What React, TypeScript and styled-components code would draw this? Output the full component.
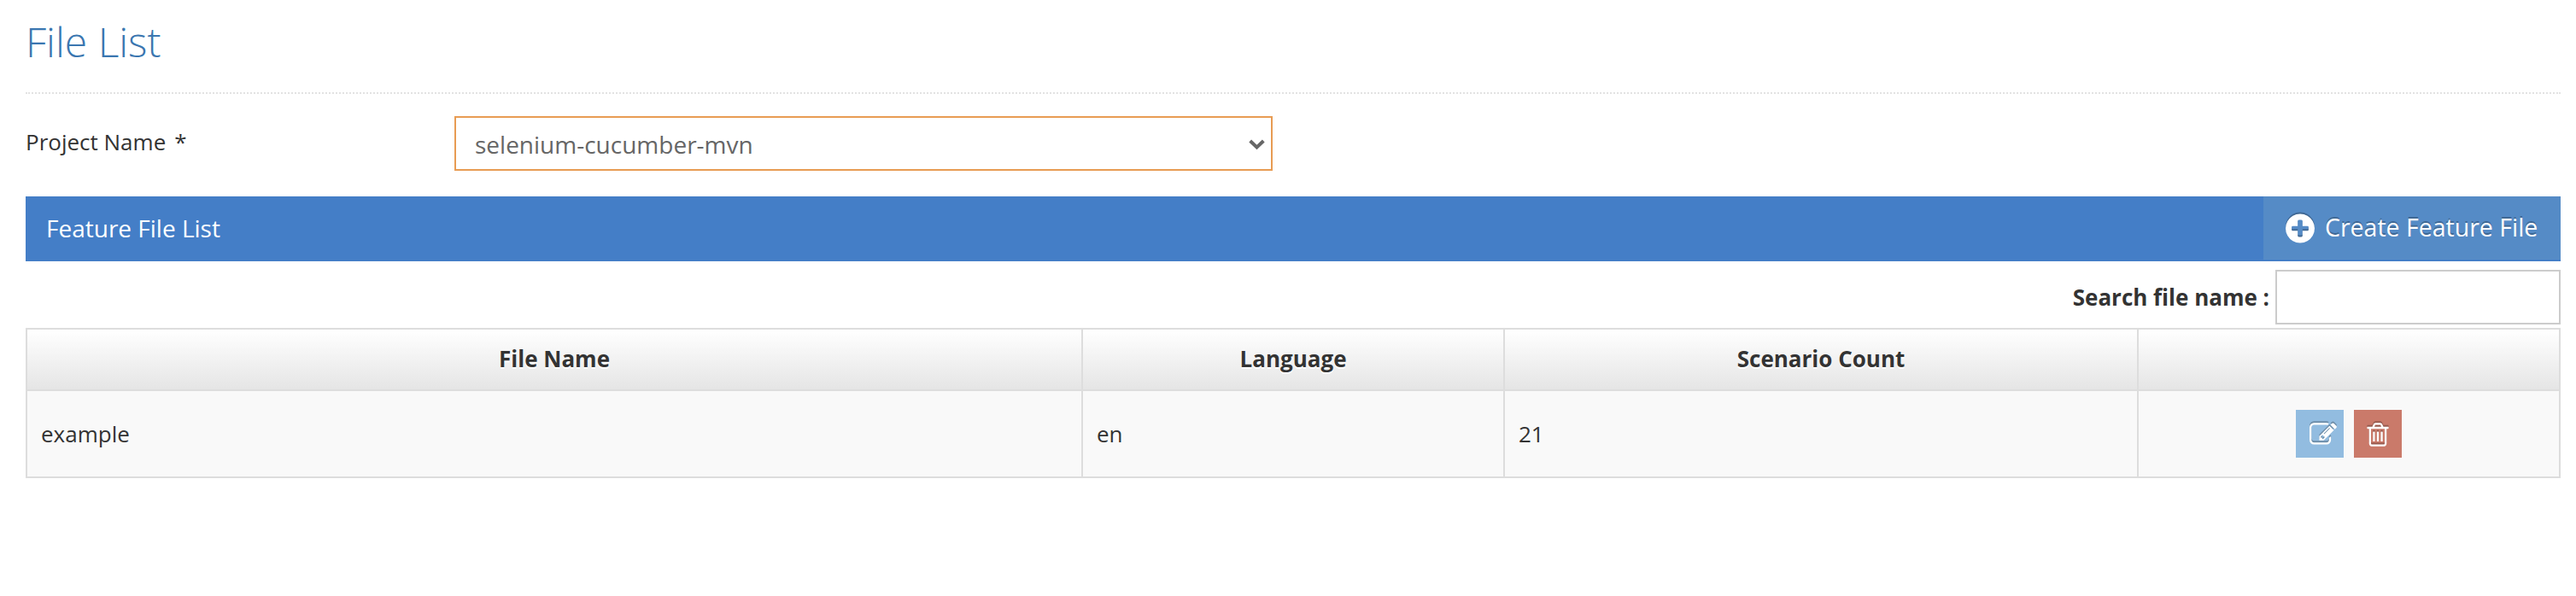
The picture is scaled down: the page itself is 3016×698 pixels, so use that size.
import React from 'react';
import styled, { createGlobalStyle } from 'styled-components';

const GlobalStyle = createGlobalStyle`
  * { box-sizing: border-box; }
  body {
    margin: 0;
    background: #fff;
    color: #333;
    font-family: 'Open Sans', sans-serif;
    font-size: 26px;
    line-height: 40px;
  }
`;

const Page = styled.main`
  width: 3016px;
  height: 698px;
  padding: 0 18px 0 30px;
`;

const PageHeader = styled.header`
  height: 110px;
  padding-top: 16px;
  border-bottom: 2px dotted #e2e2e2;
`;

const Title = styled.h1`
  margin: 0;
  font-size: 48px;
  font-weight: 300;
  line-height: 66px;
  color: #3a76b0;
`;

const FormRow = styled.div`
  display: flex;
  height: 120px;
  padding-top: 26px;
`;

const FieldLabel = styled.label`
  width: 502px;
  padding-top: 10px;
`;

const Required = styled.span`
  margin-left: 10px;
`;

const SelectBox = styled.div`
  display: flex;
  align-items: center;
  justify-content: space-between;
  width: 958px;
  height: 64px;
  padding: 2px 7px 0 22px;
  border: 2px solid #e89c53;
  font-size: 28px;
  color: #666;
`;

const TitleBar = styled.div`
  display: flex;
  justify-content: space-between;
  height: 76px;
  padding-left: 24px;
  background: #447ec7;
  color: #fff;
  font-size: 28px;
  line-height: 74px;
`;

const CreateButton = styled.button`
  display: flex;
  align-items: center;
  width: 348px;
  height: 74px;
  padding: 0 0 0 25.5px;
  border: 0;
  background: #558bc6;
  color: #fff;
  font: inherit;
  font-size: 28.5px;
  text-shadow: 0 -2px 0 rgba(0, 0, 0, 0.25);
`;

const CreateLabel = styled.span`
  margin-left: 12.5px;
  padding-bottom: 2px;
`;

const Icon = styled.svg<{ $size: number }>`
  display: block;
  flex: none;
  width: ${(p) => p.$size}px;
  height: ${(p) => p.$size}px;
  fill: currentColor;
  overflow: visible;
  filter: drop-shadow(0 -2px 0 rgba(0, 0, 0, 0.25));
`;

const SearchRow = styled.div`
  display: flex;
  justify-content: flex-end;
  align-items: center;
  gap: 7px;
  height: 64px;
  margin: 10px 0 4px;
  font-weight: 700;
`;

const SearchInput = styled.input`
  width: 334px;
  height: 64px;
  border: 2px solid #ccc;
  background: #fff;
`;

const Table = styled.table`
  width: 2968px;
  table-layout: fixed;
  border-collapse: separate;
  border-spacing: 0;
  border-top: 2px solid #ddd;
  border-left: 2px solid #ddd;
`;

const HeadCell = styled.th<{ $width: number }>`
  width: ${(p) => p.$width}px;
  height: 72px;
  padding: 0 0 2px;
  border-right: 2px solid #ddd;
  border-bottom: 2px solid #ddd;
  background: linear-gradient(#fff, #e5e5e5);
  font-weight: 700;
  text-align: center;
  text-shadow: 0 2px 0 #fff;
`;

const Cell = styled.td`
  height: 102px;
  padding: 0 16px;
  border-right: 2px solid #ddd;
  border-bottom: 2px solid #ddd;
  background: #f9f9f9;
`;

const Actions = styled.div`
  display: flex;
  justify-content: center;
  gap: 12px;
`;

const ActionButton = styled.button<{ $color: string; $indent?: number }>`
  display: flex;
  align-items: center;
  justify-content: center;
  width: 56px;
  height: 56px;
  padding: 1px 0 0 ${(p) => p.$indent ?? 0}px;
  border: 0;
  background: ${(p) => p.$color};
  color: #fff;
`;

const PLUS =
  'M1344 960v-128q0-26-19-45t-45-19h-256v-256q0-26-19-45t-45-19h-128q-26 0-45 19t-19 45v256h-256q-26 0-45 19t-19 45v128q0 26 19 45t45 19h256v256q0 26 19 45t45 19h128q26 0 45-19t19-45v-256h256q26 0 45-19t19-45zm320-64q0 209-103 385.500t-279.500 279.500-385.500 103-385.500-103-279.500-279.500-103-385.500 103-385.500 279.500-279.500 385.500-103 385.500 103 279.500 279.500 103 385.500z';
const EDIT =
  'M888 1184l116-116-152-152-116 116v56h96v96h56zm440-720q-16-16-33 1l-350 350q-17 17-1 33t33-1l350-350q17-17 1-33zm80 594v190q0 119-84.500 203.500t-203.500 84.500h-832q-119 0-203.500-84.500t-84.500-203.500v-832q0-119 84.500-203.500t203.500-84.500h832q63 0 117 25 15 7 18 23 3 17-9 29l-49 49q-14 14-32 8-23-6-45-6h-832q-66 0-113 47t-47 113v832q0 66 47 113t113 47h832q66 0 113-47t47-113v-126q0-13 9-22l64-64q15-15 35-7t20 29zm-96-738l288 288-672 672h-288v-288zm444 132l-92 92-288-288 92-92q28-28 68-28t68 28l152 152q28 28 28 68t-28 68z';
const TRASH =
  'M704 736v576q0 14-9 23t-23 9h-64q-14 0-23-9t-9-23v-576q0-14 9-23t23-9h64q14 0 23 9t9 23zm256 0v576q0 14-9 23t-23 9h-64q-14 0-23-9t-9-23v-576q0-14 9-23t23-9h64q14 0 23 9t9 23zm256 0v576q0 14-9 23t-23 9h-64q-14 0-23-9t-9-23v-576q0-14 9-23t23-9h64q14 0 23 9t9 23zm128 724v-948h-896v948q0 22 7 40.500t14.500 27 10.500 8.500h832q3 0 10.500-8.500t14.500-27 7-40.500zm-672-1076h448l-48-117q-7-9-17-11h-317q-10 2-17 11zm928 32v64q0 14-9 23t-23 9h-96v948q0 83-47 143.500t-113 60.500h-832q-66 0-113-58.500t-47-141.500v-952h-96q-14 0-23-9t-9-23v-64q0-14 9-23t23-9h309l70-167q15-37 54-63t79-26h320q40 0 79 26t54 63l70 167h309q14 0 23 9t9 23z';

const columns = [
  { label: 'File Name', width: 1236 },
  { label: 'Language', width: 494 },
  { label: 'Scenario Count', width: 742 },
  { label: '', width: 494 },
];

const files = [{ name: 'example', language: 'en', scenarios: 21 }];

export default function App() {
  return (
    <>
      <GlobalStyle />
      <Page>
        <PageHeader>
          <Title>File List</Title>
        </PageHeader>
        <FormRow>
          <FieldLabel>
            Project Name<Required>*</Required>
          </FieldLabel>
          <SelectBox>
            <span>selenium-cucumber-mvn</span>
            <svg width="19" height="13" viewBox="0 0 19 13">
              <path d="M1.700 2 9.500 9.500 17.300 2" fill="none" stroke="#666" strokeWidth="4" />
            </svg>
          </SelectBox>
        </FormRow>
        <TitleBar>
          <span>Feature File List</span>
          <CreateButton>
            <Icon $size={34} viewBox="128 104 1536 1536">
              <path d={PLUS} />
            </Icon>
            <CreateLabel>Create Feature File</CreateLabel>
          </CreateButton>
        </TitleBar>
        <SearchRow>
          <label htmlFor="search">Search file name :</label>
          <SearchInput id="search" />
        </SearchRow>
        <Table>
          <thead>
            <tr>
              {columns.map((c) => (
                <HeadCell key={c.width + c.label} $width={c.width}>
                  {c.label}
                </HeadCell>
              ))}
            </tr>
          </thead>
          <tbody>
            {files.map((f) => (
              <tr key={f.name}>
                <Cell>{f.name}</Cell>
                <Cell>{f.language}</Cell>
                <Cell>{f.scenarios}</Cell>
                <Cell>
                  <Actions>
                    <ActionButton $color="#92bce0" $indent={7} aria-label="Edit">
                      <Icon $size={32} viewBox="0 0 1792 1792">
                        <path d={EDIT} />
                      </Icon>
                    </ActionButton>
                    <ActionButton $color="#ca7a6a" aria-label="Delete">
                      <Icon $size={32} viewBox="0 0 1792 1792">
                        <path d={TRASH} />
                      </Icon>
                    </ActionButton>
                  </Actions>
                </Cell>
              </tr>
            ))}
          </tbody>
        </Table>
      </Page>
    </>
  );
}
